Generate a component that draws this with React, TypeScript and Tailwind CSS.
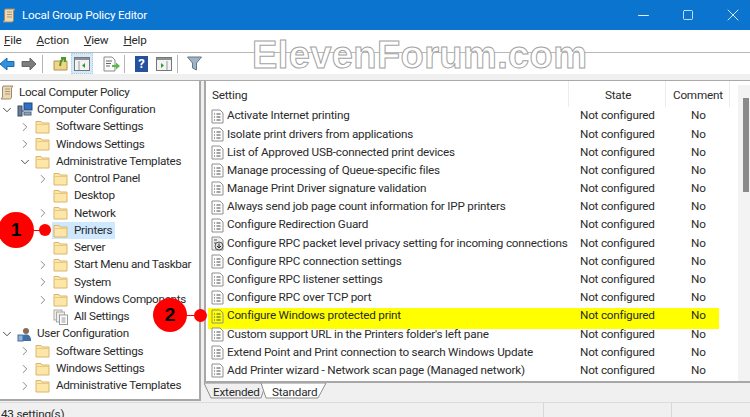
import React from "react";
import { ChevronRight, ChevronDown, Minus, Square, X } from "lucide-react";

const font = "font-['Roboto','Noto_Sans',sans-serif]";

const Folder = () => (
  <svg width="15" height="14" viewBox="0 0 15 14" className="shrink-0">
    <path d="M1 3.500V1.500h5l1 1.500h7v10H1z" fill="#fde7a8" stroke="#d9b66a" strokeWidth="1" />
    <path d="M1.500 4.500h12" stroke="#e9c97f" strokeWidth="1" />
  </svg>
);

const Scroll = () => (
  <svg width="14" height="15" viewBox="0 0 14 15" className="shrink-0">
    <path d="M3 1h10l-1.500 2v9c0 1.500-1 2-2 2H1l1.500-2V3z" fill="#ecd9b2" stroke="#9a8a70" strokeWidth="1" />
    <path d="M5 4h5M5 6.500h5M5 9h5" stroke="#a8977a" strokeWidth="1" />
  </svg>
);

const Computer = () => (
  <svg width="16" height="15" viewBox="0 0 16 15" className="shrink-0">
    <rect x="7" y="1" width="8" height="7" fill="#2f6fc4" stroke="#24477d" />
    <rect x="1" y="4" width="4" height="10" fill="#6a7d98" stroke="#3b4a63" />
    <rect x="7" y="10" width="7" height="3" fill="#8fa6c2" stroke="#50627c" />
    <path d="M5 9h2" stroke="#3b4a63" />
  </svg>
);

const UserIcon = () => (
  <svg width="16" height="15" viewBox="0 0 16 15" className="shrink-0">
    <circle cx="9" cy="4" r="3" fill="#8a6b55" />
    <path d="M4 14c0-5 2-6.500 5-6.500s5 1.500 5 6.500z" fill="#3f6ea8" />
    <rect x="1" y="8" width="5" height="6" fill="#8fb4dc" stroke="#4c6f99" />
  </svg>
);

const AllSettings = () => (
  <svg width="15" height="16" viewBox="0 0 15 16" className="shrink-0">
    <rect x="1" y="1" width="8" height="10" fill="#f4efe2" stroke="#aaa" />
    <rect x="3.500" y="3" width="8" height="10" fill="#eee" stroke="#aaa" />
    <rect x="6.500" y="6" width="8" height="9.500" fill="#fff" stroke="#999" />
    <path d="M8.500 9h4M8.500 11h4M8.500 13h4" stroke="#999" />
  </svg>
);

const PolicyDoc = ({ special, marked }: { special?: boolean; marked?: boolean }) => (
  <svg width="13" height="15" viewBox="0 0 13 15" className="shrink-0">
    <path d="M1 1h8l3 3v10H1z" fill={special ? "#ececec" : marked ? "#ffff00" : "#fdfdfd"} stroke="#8f8f8f" />
    {special ? (
      <>
        <circle cx="8" cy="10" r="4" fill="#dcdcdc" stroke="#555" />
        <path d="M8 7.500v4M6 10l2 2 2-2" stroke="#222" fill="none" />
        <path d="M3 4h3M3 7h2" stroke="#555" />
      </>
    ) : (
      <path d="M3 5h1M5.500 5h4M3 8h1M5.500 8h4M3 11h1M5.500 11h4" stroke="#4a4a4a" />
    )}
  </svg>
);

const treeRows = [
  { label: "Local Computer Policy", pad: "pl-0", icon: "scroll" },
  { label: "Computer Configuration", pad: "pl-[4px]", icon: "computer", open: true },
  { label: "Software Settings", pad: "pl-[22px]", arrow: true },
  { label: "Windows Settings", pad: "pl-[22px]", arrow: true },
  { label: "Administrative Templates", pad: "pl-[22px]", open: true },
  { label: "Control Panel", pad: "pl-[40px]", arrow: true },
  { label: "Desktop", pad: "pl-[53px]" },
  { label: "Network", pad: "pl-[40px]", arrow: true },
  { label: "Printers", pad: "pl-[53px]", selected: true },
  { label: "Server", pad: "pl-[53px]" },
  { label: "Start Menu and Taskbar", pad: "pl-[40px]", arrow: true },
  { label: "System", pad: "pl-[40px]", arrow: true },
  { label: "Windows Components", pad: "pl-[40px]", arrow: true },
  { label: "All Settings", pad: "pl-[53px]", icon: "all" },
  { label: "User Configuration", pad: "pl-[4px]", icon: "user", open: true },
  { label: "Software Settings", pad: "pl-[22px]", arrow: true },
  { label: "Windows Settings", pad: "pl-[22px]", arrow: true },
  { label: "Administrative Templates", pad: "pl-[22px]", arrow: true },
];

const settings = [
  "Activate Internet printing",
  "Isolate print drivers from applications",
  "List of Approved USB-connected print devices",
  "Manage processing of Queue-specific files",
  "Manage Print Driver signature validation",
  "Always send job page count information for IPP printers",
  "Configure Redirection Guard",
  "Configure RPC packet level privacy setting for incoming connections",
  "Configure RPC connection settings",
  "Configure RPC listener settings",
  "Configure RPC over TCP port",
  "Configure Windows protected print",
  "Custom support URL in the Printers folder's left pane",
  "Extend Point and Print connection to search Windows Update",
  "Add Printer wizard - Network scan page (Managed network)",
];

const TreeIcon = ({ icon }: { icon?: string }) => {
  if (icon === "scroll") return <Scroll />;
  if (icon === "computer") return <Computer />;
  if (icon === "user") return <UserIcon />;
  if (icon === "all") return <AllSettings />;
  return <Folder />;
};

const Toolbar = () => (
  <div className="h-[21px] flex items-center bg-white relative shrink-0">
    <svg width="15" height="14" viewBox="0 0 15 14" className="shrink-0">
      <path d="M7 1L0 7l7 6V9.500h7v-5H7z" fill="#2f8fe0" stroke="#1c6bb0" />
    </svg>
    <svg width="16" height="14" viewBox="0 0 16 14" className="ml-[6px] shrink-0">
      <path d="M9 1l6 6-6 6V9.500H1v-5h8z" fill="#7d7d7d" stroke="#666" />
    </svg>
    <div className="w-px h-[18px] bg-[#b5b5b5] ml-[5px]" />
    <svg width="15" height="15" viewBox="0 0 15 15" className="ml-[10px] shrink-0">
      <path d="M1 5h13v9H1z" fill="#f0d48a" stroke="#b3924f" />
      <path d="M7 10l1-5 3-3M8 2l4 0 0 4" stroke="#4d9a28" strokeWidth="2" fill="none" />
    </svg>
    <div className="ml-[3px] w-[22px] h-[21px] bg-[#d5e8f7] border border-dotted border-[#a8cfee] flex items-center justify-center">
      <svg width="16" height="14" viewBox="0 0 16 14">
        <rect x="0.500" y="0.500" width="15" height="13" fill="#f3f3f3" stroke="#777" />
        <rect x="1" y="1" width="14" height="2" fill="#8a9098" />
        <path d="M5 4v9" stroke="#999" />
        <path d="M11 6v5L8 8.500z" fill="#2e9b3a" />
      </svg>
    </div>
    <svg width="17" height="16" viewBox="0 0 17 16" className="ml-[10px] shrink-0">
      <path d="M1 1h8l3 3v11H1z" fill="#fafafa" stroke="#8c8c8c" />
      <path d="M3 5h6M3 7.500h5M3 10h4" stroke="#666" />
      <path d="M9 9h4V6.500l4 3.500-4 3.500V11H9z" fill="#58b947" />
    </svg>
    <div className="w-px h-[18px] bg-[#b5b5b5] ml-[4px]" />
    <div className="ml-[10px] w-[13px] h-[16px] bg-[#26519e] flex items-center justify-center text-white text-[13px] font-bold leading-none">?</div>
    <svg width="16" height="14" viewBox="0 0 16 14" className="ml-[8px] shrink-0">
      <rect x="0.500" y="0.500" width="15" height="13" fill="#f3f3f3" stroke="#777" />
      <rect x="1" y="1" width="14" height="2" fill="#8a9098" />
      <path d="M11 4v9" stroke="#999" />
      <path d="M5 6v5l3-2.500z" fill="#2e9b3a" />
    </svg>
    <div className="w-px h-[18px] bg-[#b5b5b5] ml-[5px]" />
    <svg width="15" height="15" viewBox="0 0 15 15" className="ml-[9px] shrink-0">
      <path d="M0.500 1h14l-5 6v7l-4-2V7z" fill="#9fb4c4" stroke="#65798a" />
    </svg>
  </div>
);

export default function App() {
  return (
    <div className={`${font} relative w-[750px] h-[417px] overflow-hidden bg-[#f0f0f0] text-[#2b2b2b] text-[11.7px] tracking-[-0.2px] flex flex-col`}>
      {/* title bar */}
      <div className="h-[30px] bg-[#0a74cf] flex items-center text-white shrink-0">
        <div className="ml-[2px]"><Scroll /></div>
        <span className="ml-[6px] pt-[1px] leading-none">Local Group Policy Editor</span>
        <div className="ml-auto flex items-center">
          <Minus size={17} strokeWidth={1.25} className="mr-[30px]" />
          <Square size={12} strokeWidth={1.5} className="mr-[29px]" />
          <X size={20} strokeWidth={1} className="mr-[7px]" />
        </div>
      </div>
      {/* menu */}
      <div className="h-[23px] bg-white flex items-center shrink-0 border-b border-b-[#b8b8b8]">
        <span className="ml-[4px]"><u>F</u>ile</span>
        <span className="ml-[15px]"><u>A</u>ction</span>
        <span className="ml-[15px]"><u>V</u>iew</span>
        <span className="ml-[15px]"><u>H</u>elp</span>
      </div>
      <Toolbar />
      <div className="h-[7px] bg-[#f0f0f0] shrink-0 border-b border-b-[#a9a9a9]" />
      {/* panes */}
      <div className="flex h-[321px] shrink-0">
        <div className="w-[201px] h-[320px] shrink-0 bg-white border-r-2 border-b-2 border-[#a8a8a8] pt-[3px] overflow-hidden tracking-[-0.3px]">
          {treeRows.map((r, i) => (
            <div key={i} className={`h-[17.25px] flex items-center whitespace-nowrap ${r.pad}`}>
              {r.open && <ChevronDown size={14} strokeWidth={1.5} className="-ml-[4px] mr-[3px] shrink-0 text-[#333]" />}
              {r.arrow && <ChevronRight size={14} strokeWidth={1.5} className="-ml-[4px] mr-[3px] shrink-0 text-[#777]" />}
              <div className={`flex items-center h-full ${r.selected ? "bg-[#cde8ff] -ml-[1px] pl-[1px] pr-[3px]" : ""}`}>
                <TreeIcon icon={r.icon} />
                <span className={r.icon === "computer" || r.icon === "user" ? "ml-[4px]" : r.icon === "scroll" ? "ml-[5px]" : "ml-[6px]"}>{r.label}</span>
              </div>
            </div>
          ))}
        </div>
        <div className="w-[3px] bg-[#f0f0f0] shrink-0" />
        <div className="flex-1 flex flex-col">
          <div className="h-[302px] shrink-0 bg-white border-l-2 border-b-2 border-[#a8a8a8] relative overflow-hidden">
            <div className="h-[26px] flex">
              <span className="w-[363px] pl-[6px] pt-[3px] flex items-center border-r border-r-[#ececec]">Setting</span>
              <span className="w-[97px] pl-[36px] pt-[3px] flex items-center border-r border-r-[#ececec]">State</span>
              <span className="w-[64px] pl-[7px] pt-[3px] flex items-center border-r border-r-[#ececec]">Comment</span>
            </div>
            {settings.map((s, i) => (
              <div key={i} className="h-[18.2px] relative flex items-center whitespace-nowrap">
                {i === 11 && <div className="absolute left-[2px] top-[1px] w-[511px] h-[21px] bg-[#ffff00]" />}
                <div className="relative flex items-center w-full">
                  <div className="ml-[5px]"><PolicyDoc special={i === 7} marked={i === 11} /></div>
                  <span className="ml-[3px] w-[352px] shrink-0">{s}</span>
                  <span className="ml-[1px] w-[111px] shrink-0">Not configured</span>
                  <span>No</span>
                </div>
              </div>
            ))}
            {/* scrollbar */}
            <div className="absolute right-0 top-[4px] bottom-0 w-[12px] bg-[#f3f3f3]">
              <div className="absolute right-[1px] top-[13px] w-[6px] h-[94px] bg-[#8a8a8a]" />
            </div>
          </div>
          {/* tabs */}
          <div className="relative h-[18px] flex items-start">
            <svg width="126" height="17" viewBox="0 0 126 17" className="absolute left-0 top-0">
              <path d="M0 0l7 15h50l5-15z" fill="#f0f0f0" stroke="#8f8f8f" />
              <path d="M57 0l5 15h52l8-15z" fill="#ffffff" stroke="#8f8f8f" />
            </svg>
            <span className="relative ml-[9px] mt-[1px] w-[59px]">Extended</span>
            <span className="relative mt-[1px]">Standard</span>
          </div>
        </div>
      </div>
      {/* status bar */}
      <div className="flex-1 border-t border-t-[#dcdcdc] bg-[#f0f0f0] flex">
        <div className="w-[544px] pl-[1px] pt-[2px] leading-[18px] border-r border-r-[#d8d8d8]">43 setting(s)</div>
        <div className="w-[128px] border-r border-r-[#d8d8d8]" />
      </div>

      {/* watermark */}
      <div className="absolute left-[252px] top-[34px] text-[38px] leading-[42px] font-bold font-['Liberation_Sans',sans-serif] text-white [-webkit-text-stroke:1px_#a3a3a3] tracking-[0.4px]">ElevenForum.com</div>

      {/* callouts */}
      <div className="absolute left-[-2px] top-[212px] w-[36px] h-[36px] rounded-full bg-[#ff0000] flex items-center justify-center text-[19px] tracking-normal font-bold text-black font-['Liberation_Sans',sans-serif]">1</div>
      <div className="absolute left-[34px] top-[230px] w-[6px] h-px bg-[#ff0000]" />
      <div className="absolute left-[39px] top-[224px] w-[12px] h-[12px] rounded-full bg-[#ff0000]" />
      <div className="absolute left-[153px] top-[298px] w-[34px] h-[34px] rounded-full bg-[#ff0000] flex items-center justify-center text-[19px] tracking-normal font-bold text-black font-['Liberation_Sans',sans-serif]">2</div>
      <div className="absolute left-[187px] top-[315px] w-[8px] h-px bg-[#ff0000]" />
      <div className="absolute left-[194px] top-[309px] w-[13px] h-[13px] rounded-full bg-[#ff0000]" />
    </div>
  );
}
